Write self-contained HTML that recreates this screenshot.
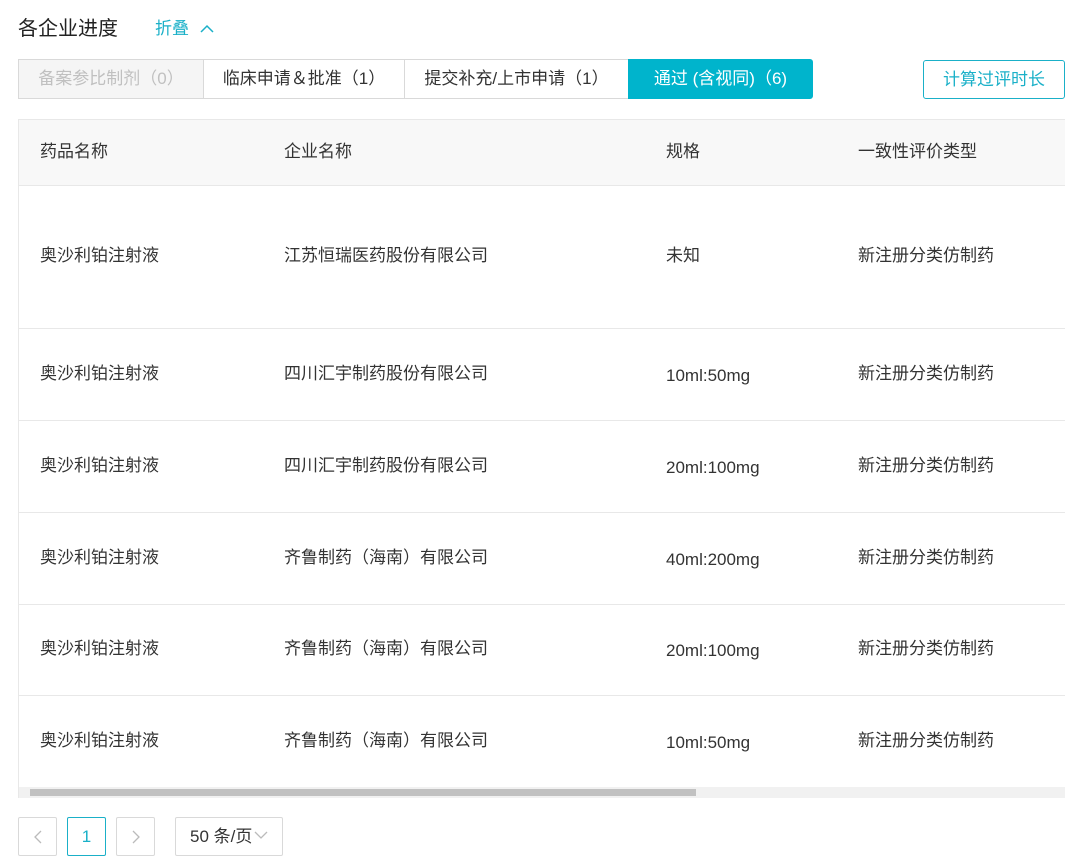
<!DOCTYPE html>
<html><head><meta charset="utf-8"><style>
*{box-sizing:border-box;margin:0;padding:0}
body{width:1080px;height:868px;background:#fff;font-family:"Liberation Sans","Noto Sans CJK SC",sans-serif;color:#333;position:relative;overflow:hidden}
.a{position:absolute}
.title{left:18px;top:12px;font-size:20px;color:#222}
.fold{left:155px;top:14px;font-size:17px;color:#1ab0c8}
.tab{position:absolute;top:59px;height:40px;border:1px solid #d9d9d9;font-size:17px;line-height:37px;text-align:center;background:#fff;color:#333}
.tbl{left:18px;top:119px;width:1047px;height:679px;border:1px solid #e8e8e8;border-right:none}
.row{position:absolute;left:0;width:1046px;border-bottom:1px solid #e8e8e8;font-size:17px}
.row span{position:absolute;top:50%;margin-top:-13px;line-height:24px;white-space:nowrap}
.row span.l{margin-top:-11px}
.pg{position:absolute;top:817px;height:39px;border:1px solid #d9d9d9;border-radius:2px;font-size:17px;line-height:37px;text-align:center;color:#bbb}
</style></head><body>
<div class="a title">各企业进度</div>
<div class="a fold">折叠 <svg width="14" height="10" viewBox="0 0 14 10" style="margin-left:6px"><path d="M1 8 L7 2 L13 8" fill="none" stroke="#1ab0c8" stroke-width="1.5"/></svg></div>
<div class="tab" style="left:18px;width:186px;background:#f5f5f5;color:#c0c0c0">备案参比制剂（0）</div>
<div class="tab" style="left:203px;width:202px">临床申请＆批准（1）</div>
<div class="tab" style="left:404px;width:225px">提交补充/上市申请（1）</div>
<div class="tab" style="left:628px;width:185px;background:#00b4cc;border-color:#00b4cc;color:#fff;border-radius:0 3px 3px 0">通过 (含视同)（6)</div>
<div class="tab" style="left:923px;width:142px;top:60px;height:39px;border-color:#1ab0c8;color:#1ab0c8;border-radius:3px">计算过评时长</div>
<div class="a tbl">
<div class="row" style="top:0;height:66px;background:#f8f8f8"><span style="left:21px">药品名称</span><span style="left:265px">企业名称</span><span style="left:647px">规格</span><span style="left:839px">一致性评价类型</span></div>
<div class="row" style="top:66px;height:143px"><span style="left:21px">奥沙利铂注射液</span><span style="left:265px">江苏恒瑞医药股份有限公司</span><span style="left:647px">未知</span><span style="left:839px">新注册分类仿制药</span></div>
<div class="row" style="top:209px;height:92px"><span style="left:21px">奥沙利铂注射液</span><span style="left:265px">四川汇宇制药股份有限公司</span><span class="l" style="left:647px">10ml:50mg</span><span style="left:839px">新注册分类仿制药</span></div>
<div class="row" style="top:301px;height:92px"><span style="left:21px">奥沙利铂注射液</span><span style="left:265px">四川汇宇制药股份有限公司</span><span class="l" style="left:647px">20ml:100mg</span><span style="left:839px">新注册分类仿制药</span></div>
<div class="row" style="top:393px;height:92px"><span style="left:21px">奥沙利铂注射液</span><span style="left:265px">齐鲁制药（海南）有限公司</span><span class="l" style="left:647px">40ml:200mg</span><span style="left:839px">新注册分类仿制药</span></div>
<div class="row" style="top:485px;height:91px"><span style="left:21px">奥沙利铂注射液</span><span style="left:265px">齐鲁制药（海南）有限公司</span><span class="l" style="left:647px">20ml:100mg</span><span style="left:839px">新注册分类仿制药</span></div>
<div class="row" style="top:576px;height:92px;border-bottom:none"><span style="left:21px">奥沙利铂注射液</span><span style="left:265px">齐鲁制药（海南）有限公司</span><span class="l" style="left:647px">10ml:50mg</span><span style="left:839px">新注册分类仿制药</span></div>
<div class="a" style="left:0;top:667px;width:1046px;height:11px;background:#f1f1f1"><div class="a" style="left:11px;top:2px;width:666px;height:7px;background:#c1c1c1"></div></div>
</div>
<div class="pg" style="left:18px;width:39px"><svg width="10" height="14" viewBox="0 0 10 14" style="margin-top:12px"><path d="M8 1 L2 7 L8 13" fill="none" stroke="#bbb" stroke-width="1.3"/></svg></div>
<div class="pg" style="left:67px;width:39px;border-color:#1ab0c8;color:#1ab0c8">1</div>
<div class="pg" style="left:116px;width:39px"><svg width="10" height="14" viewBox="0 0 10 14" style="margin-top:12px"><path d="M2 1 L8 7 L2 13" fill="none" stroke="#bbb" stroke-width="1.3"/></svg></div>
<div class="pg" style="left:175px;width:108px;color:#333;text-align:left;padding-left:14px">50 条/页<svg width="14" height="9" viewBox="0 0 14 9" style="margin-left:2px;vertical-align:2px"><path d="M1 1 L7 7 L13 1" fill="none" stroke="#bbb" stroke-width="1.3"/></svg></div>
</body></html>
